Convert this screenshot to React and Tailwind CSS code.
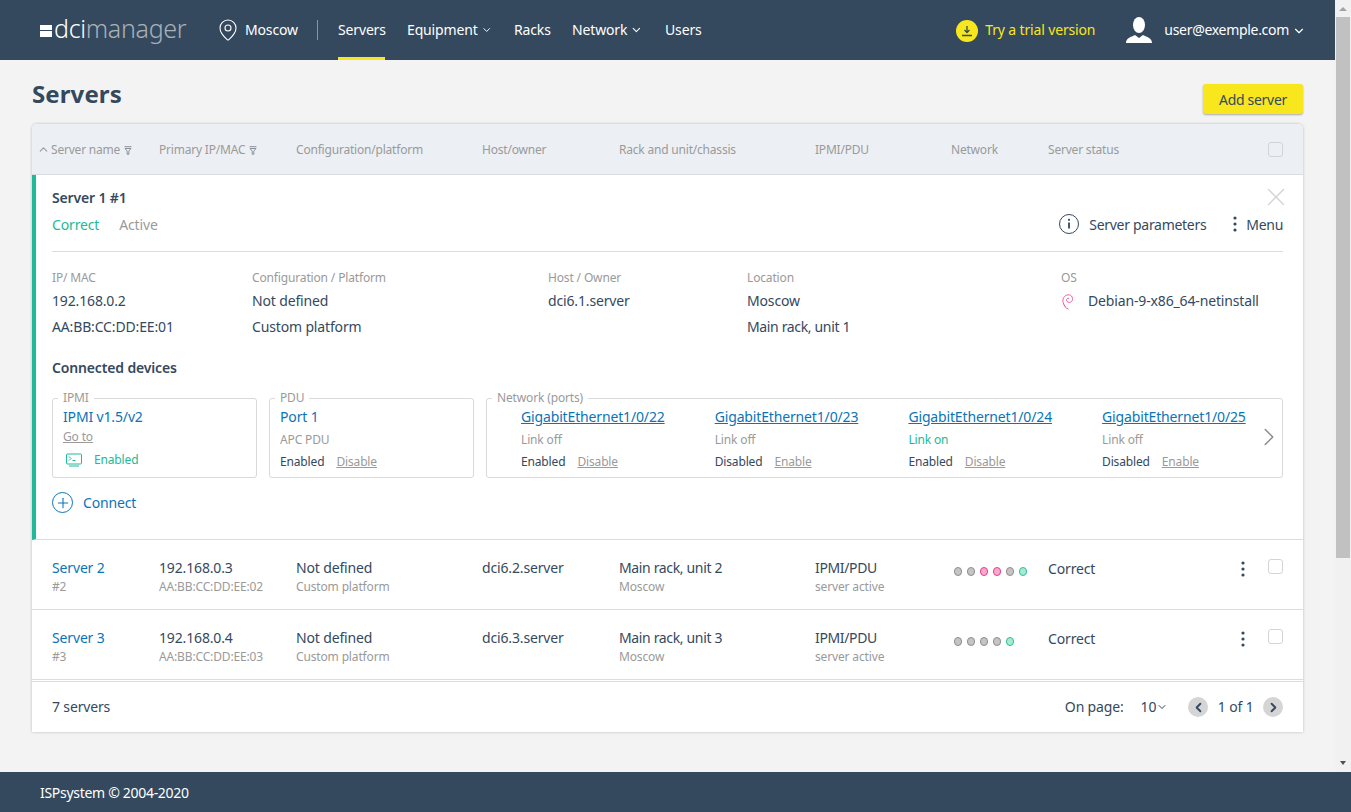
import React from "react";
import { ChevronDown, ChevronUp, ChevronLeft, ChevronRight, X, MapPin, Plus } from "lucide-react";

const font = "font-['Noto_Sans','Open_Sans',sans-serif]";

function Dots({ className = "" }) {
  return (
    <svg width="4" height="16" viewBox="0 0 4 16" className={className}>
      <circle cx="2" cy="2" r="1.6" fill="#34495e" />
      <circle cx="2" cy="8" r="1.6" fill="#34495e" />
      <circle cx="2" cy="14" r="1.6" fill="#34495e" />
    </svg>
  );
}

function Filter() {
  return (
    <svg width="8" height="9" viewBox="0 0 8 9" className="ml-1 mt-0.5">
      <path d="M.5.7h7M1 2.500l2.200 2.600v3.200h1.600V5.100L7 2.500z" fill="none" stroke="#8a9299" strokeWidth="1" />
    </svg>
  );
}

function Head({ w, children }) {
  return <div className={`${w} flex items-center shrink-0 pt-px`}>{children}</div>;
}

function Led({ c }) {
  const map = {
    g: "bg-[#c4c4c4] border-[#8f8f8f]",
    p: "bg-[#f7a8cc] border-[#e8408f]",
    t: "bg-[#a9e8d4] border-[#2dbf9b]",
  };
  return <span className={`w-2 h-[9px] rounded-full border ${map[c]}`} />;
}

function Row({ n, ip, mac, leds }) {
  return (
    <div className="h-[70px] shrink-0 flex pl-5 pt-[18px] border-b border-[#dcdcdc] bg-white box-border">
      <div className="w-[107px] shrink-0">
        <div className="text-[14px] leading-5 text-[#0a74b8]">Server {n}</div>
        <div className="text-[12px] leading-4 mt-px text-[#9a9a9a]">#{n}</div>
      </div>
      <div className="w-[137px] shrink-0">
        <div className="text-[14px] leading-5">{ip}</div>
        <div className="text-[12px] leading-4 mt-px text-[#9a9a9a]">{mac}</div>
      </div>
      <div className="w-[186px] shrink-0">
        <div className="text-[14px] leading-5">Not defined</div>
        <div className="text-[12px] leading-4 mt-px text-[#9a9a9a]">Custom platform</div>
      </div>
      <div className="w-[137px] shrink-0 text-[14px] leading-5">dci6.{n}.server</div>
      <div className="w-[196px] shrink-0">
        <div className="text-[14px] leading-5 tracking-[-0.35px]">Main rack, unit {n}</div>
        <div className="text-[12px] leading-4 mt-px text-[#9a9a9a]">Moscow</div>
      </div>
      <div className="w-[136px] shrink-0">
        <div className="text-[14px] leading-5 tracking-[-0.35px]">IPMI/PDU</div>
        <div className="text-[12px] leading-4 mt-px text-[#9a9a9a]">server active</div>
      </div>
      <div className="w-[97px] shrink-0 flex gap-[5px] pl-[3px] pt-[9px] items-start">
        {leds.map((c, i) => <Led key={i} c={c} />)}
      </div>
      <div className="w-[193px] shrink-0 text-[14px] leading-5 pt-px">Correct</div>
      <div className="w-[27px] shrink-0 pt-[3px]"><Dots /></div>
      <div className="w-[15px] h-[15px] shrink-0 border border-[#d4d4d4] rounded-[3px] mt-[1px] bg-white" />
    </div>
  );
}

function Box({ label, w, className = "", children }) {
  return (
    <div className={`${w} relative h-20 border border-[#d9d9d9] rounded-[3px] shrink-0 ${className}`}>
      <span className="absolute -top-[9px] left-[5px] bg-white px-[5px] text-[12px] leading-4 text-[#9a9a9a]">{label}</span>
      {children}
    </div>
  );
}

function Port({ name, link, on, state, action }) {
  return (
    <div className="w-[193.7px] shrink-0 whitespace-nowrap">
      <div className="text-[14px] leading-5 text-[#0a74b8] underline">{name}</div>
      <div className={`text-[12px] leading-4 mt-[5px] ${on ? "text-[#22b999]" : "text-[#9a9a9a]"}`}>{link}</div>
      <div className="text-[12px] leading-4 mt-[6px] flex gap-3">
        <span className="text-[#34495e]">{state}</span>
        <span className="text-[#9a9a9a] underline">{action}</span>
      </div>
    </div>
  );
}

function DetailCol({ w, label, children }) {
  return (
    <div className={`${w} shrink-0`}>
      <div className="text-[12px] leading-4 text-[#9a9a9a]">{label}</div>
      {children}
    </div>
  );
}

export default function App() {
  return (
    <div className={`h-screen flex flex-col overflow-hidden text-[#34495e] tracking-[-0.15px] ${font}`}>
      <div className="flex flex-1 min-h-0">
        <div className="flex-1 min-w-0 bg-[#f3f3f3] flex flex-col">
          <header className="h-[60px] shrink-0 bg-[#34495e] flex items-center text-white text-[14px] pl-10">
            <div className="w-[176px] shrink-0 flex items-center">
              <div className="flex flex-col gap-[1px] mr-[2px] mt-[1px]">
                <span className="w-3 h-[5px] bg-white" />
                <span className="w-3 h-[6px] bg-white" />
              </div>
              <span className="text-[25px] leading-none font-light tracking-[-0.3px] pb-[3px]">dci<span className="text-[#a9b1b8]">manager</span></span>
            </div>
            <MapPin size={24} strokeWidth={1.100} className="shrink-0" />
            <span className="ml-[5px] w-[72px] pb-[2px]">Moscow</span>
            <span className="w-px h-5 bg-[#8795a3] mr-5" />
            <nav className="flex h-full">
              <div className="w-[47px] relative flex items-center mr-[22px] pb-[2px]">Servers<span className="absolute left-0 right-0 bottom-0 h-[3px] bg-[#f8e71c]" /></div>
              <div className="w-[85px] flex items-center mr-[22px] pb-[2px]">Equipment<ChevronDown size={14} strokeWidth={2} className="ml-[3px] mt-[2px]" /></div>
              <div className="w-[36px] flex items-center mr-[22px] pb-[2px]">Racks</div>
              <div className="w-[71px] flex items-center mr-[22px] pb-[2px]">Network<ChevronDown size={14} strokeWidth={2} className="ml-[3px] mt-[2px]" /></div>
              <div className="flex items-center pb-[2px]">Users</div>
            </nav>
            <div className="ml-auto flex items-center pr-[29px]">
              <span className="w-[22px] h-[22px] rounded-full bg-[#f8e71c] flex items-center justify-center mr-[7px] mt-[2px]">
                <svg width="12" height="12" viewBox="0 0 12 12" fill="none" stroke="#34495e" strokeWidth="1.300"><path d="M6 1v6M3.500 5 6 7.500 8.500 5M1 10.500h10" /></svg>
              </span>
              <span className="text-[#f8e71c] w-[141px] pb-[2px]">Try a trial version</span>
              <svg width="26" height="26" viewBox="0 0 26 26" fill="#fff" className="mr-3"><ellipse cx="13" cy="8" rx="6" ry="8" /><path d="M0 26c0-5 5-6 9-8l4 3 4-3c4 2 9 3 9 8z" /></svg>
              <span className="pb-[2px] tracking-[-0.3px]">user@exemple.com</span>
              <ChevronDown size={14} strokeWidth={2} className="ml-[3px] mt-[1px]" />
            </div>
          </header>

          <main className="flex-1 min-h-0 pl-8 pr-8 flex flex-col">
            <div className="h-16 flex items-start justify-between shrink-0 pt-6">
              <h1 className="text-[24px] leading-5 font-bold tracking-[0.1px]">Servers</h1>
              <button className="w-[100px] h-[30px] bg-[#f8e71c] rounded-[3px] text-[14px] tracking-[-0.3px] shadow-[0_1px_2px_rgba(0,0,0,0.3)]">Add server</button>
            </div>

            <section className="rounded-t-[5px] bg-white shadow-[0_0_3px_rgba(0,0,0,0.25)] flex flex-col">
              <div className="h-[51px] bg-[#ecf0f4] rounded-t-[5px] border-b border-[#d9dde0] flex items-center text-[12px] tracking-[-0.2px] text-[#9a9a9a] pl-[5px] pr-5 shrink-0">
                <Head w="w-[122px]"><ChevronUp size={13} className="mr-[1px]" />Server name<Filter /></Head>
                <Head w="w-[137px]">Primary IP/MAC<Filter /></Head>
                <Head w="w-[186px]">Configuration/platform</Head>
                <Head w="w-[137px]">Host/owner</Head>
                <Head w="w-[196px]">Rack and unit/chassis</Head>
                <Head w="w-[136px]">IPMI/PDU</Head>
                <Head w="w-[97px]">Network</Head>
                <Head w="w-[220px]">Server status</Head>
                <div className="w-[15px] h-[15px] border border-[#d4d4d4] rounded-[3px] ml-auto" />
              </div>

              <div className="h-[365px] shrink-0 border-l-4 border-[#22b999] border-b-[1px] border-b-[#dcdcdc] pl-4 pr-5 pt-[13px] flex flex-col">
                <div className="flex justify-between h-[20px]">
                  <span className="text-[14px] leading-5 font-semibold">Server 1 #1</span>
                  <X size={30} strokeWidth={1.200} className="text-[#d5d5d5] -mr-[7.5px] -my-[6px]" />
                </div>
                <div className="flex justify-between items-center h-[24px] box-content pt-[4px] pb-[15px] border-b border-[#dcdcdc]">
                  <div className="text-[14px]">
                    <span className="text-[#22b999] mr-5">Correct</span>
                    <span className="text-[#9a9a9a]">Active</span>
                  </div>
                  <div className="flex items-center text-[14px]">
                    <svg width="20" height="20" viewBox="0 0 20 20" fill="none" stroke="#34495e" className="mr-[10px]">
                      <circle cx="10" cy="10" r="9.500" strokeWidth="1" />
                      <path d="M10 8.500v6" strokeWidth="1.800" />
                      <circle cx="10" cy="5.800" r="1.100" fill="#34495e" stroke="none" />
                    </svg>
                    <span className="mr-[27px] tracking-[-0.3px]">Server parameters</span>
                    <Dots className="mr-[9px]" />
                    <span className="tracking-[-0.3px]">Menu</span>
                  </div>
                </div>

                <div className="flex mt-[18px] text-[14px]">
                  <DetailCol w="w-[200px]" label="IP/ MAC">
                    <div className="mt-[5px] leading-5">192.168.0.2</div>
                    <div className="mt-[6px] leading-5">AA:BB:CC:DD:EE:01</div>
                  </DetailCol>
                  <DetailCol w="w-[296px]" label="Configuration / Platform">
                    <div className="mt-[5px] leading-5">Not defined</div>
                    <div className="mt-[6px] leading-5">Custom platform</div>
                  </DetailCol>
                  <DetailCol w="w-[199px]" label="Host / Owner">
                    <div className="mt-[5px] leading-5">dci6.1.server</div>
                  </DetailCol>
                  <DetailCol w="w-[314px]" label="Location">
                    <div className="mt-[5px] leading-5">Moscow</div>
                    <div className="mt-[6px] leading-5 tracking-[-0.35px]">Main rack, unit 1</div>
                  </DetailCol>
                  <DetailCol w="w-auto" label="OS">
                    <div className="mt-[5px] leading-5 flex items-center whitespace-nowrap">
                      <svg width="13" height="17" viewBox="0 0 13 17" fill="none" stroke="#ef5ba1" strokeWidth="1" className="mr-[14px]">
                        <path d="M4.500 13.500C1.500 11 1 6 3.500 3.500 6 1 11 1 11.500 5.500 12 9 8 10.500 6 8.500 4.800 7 6 4.800 8 5.200M3 11.500c.5 2 2 4 4.500 4.500" />
                      </svg>
                      Debian-9-x86_64-netinstall
                    </div>
                  </DetailCol>
                </div>

                <div className="text-[14px] leading-5 font-semibold mt-[21px]">Connected devices</div>

                <div className="flex gap-3 mt-[20px]">
                  <Box label="IPMI" w="w-[205px]">
                    <div className="pl-[10px] pt-2">
                      <div className="text-[14px] leading-5 text-[#0a74b8]">IPMI v1.5/v2</div>
                      <div className="text-[12px] leading-4 mt-[2px] text-[#9a9a9a] underline">Go to</div>
                      <div className="flex items-center mt-[7px] text-[12px] leading-4 text-[#22b999]">
                        <svg width="18" height="15" viewBox="0 0 18 15" fill="none" stroke="#22b999" strokeWidth="1" className="ml-[2px] mr-[11px]">
                          <rect x="1.500" y="1" width="15" height="10" rx="1" /><path d="M4 3.500 6 5.500 4 7.500M7.500 7.500h3M4 13h10" />
                        </svg>
                        Enabled
                      </div>
                    </div>
                  </Box>
                  <Box label="PDU" w="w-[205px]">
                    <div className="pl-[10px] pt-2">
                      <div className="text-[14px] leading-5 text-[#0a74b8]">Port 1</div>
                      <div className="text-[12px] leading-4 mt-[5px] text-[#9a9a9a]">APC PDU</div>
                      <div className="text-[12px] leading-4 mt-[6px] flex gap-3">
                        <span>Enabled</span>
                        <span className="text-[#9a9a9a] underline">Disable</span>
                      </div>
                    </div>
                  </Box>
                  <Box label="Network (ports)" w="w-[797px]" className="flex pl-[34px] pt-2">
                    <Port name="GigabitEthernet1/0/22" link="Link off" state="Enabled" action="Disable" />
                    <Port name="GigabitEthernet1/0/23" link="Link off" state="Disabled" action="Enable" />
                    <Port name="GigabitEthernet1/0/24" link="Link on" on state="Enabled" action="Disable" />
                    <Port name="GigabitEthernet1/0/25" link="Link off" state="Disabled" action="Enable" />
                    <ChevronRight size={30} strokeWidth={1.200} className="absolute -right-[1.5px] top-[23px] text-[#8a8a8a]" />
                  </Box>
                </div>

                <div className="flex items-center mt-[14px] text-[14px] text-[#0a74b8]">
                  <span className="w-[21px] h-[21px] rounded-full border border-[#0a74b8] flex items-center justify-center mr-[10px]"><Plus size={16} strokeWidth={1.600} /></span>
                  Connect
                </div>
              </div>

              <Row n={2} ip="192.168.0.3" mac="AA:BB:CC:DD:EE:02" leds={["g", "g", "p", "p", "g", "t"]} />
              <Row n={3} ip="192.168.0.4" mac="AA:BB:CC:DD:EE:03" leds={["g", "g", "g", "g", "t"]} />

              <div className="h-[51px] shrink-0 border-t border-[#dcdcdc] mt-[1px] flex items-center pl-5 pr-5 text-[14px]">
                <span className="pb-[2px]">7 servers</span>
                <span className="ml-auto mr-[17px] pb-[2px]">On page:</span>
                <span className="flex items-center mr-5 pb-[2px]">10<ChevronDown size={12} strokeWidth={2} className="mt-[2px]" /></span>
                <span className="w-5 h-5 rounded-full bg-[#d5d5d5] flex items-center justify-center"><ChevronLeft size={15} strokeWidth={3} /></span>
                <span className="mx-[9.500px] pb-[2px]">1 of 1</span>
                <span className="w-5 h-5 rounded-full bg-[#d5d5d5] flex items-center justify-center"><ChevronRight size={15} strokeWidth={3} /></span>
              </div>
            </section>
          </main>
        </div>
        <div className="w-4 shrink-0 bg-[#f1f1f1] flex flex-col items-center">
          <svg width="16" height="17" viewBox="0 0 16 17"><path d="M4 11l4-4 4 4z" fill="#a3a3a3" /></svg>
          <div className="w-[14px] h-[541px] bg-[#c1c1c1]" />
          <div className="flex-1" />
          <svg width="16" height="17" viewBox="0 0 16 17"><path d="M5 6h6l-3 4z" fill="#505050" /></svg>
        </div>
      </div>
      <footer className="h-10 shrink-0 bg-[#34495e] text-white text-[14px] tracking-[-0.3px] flex items-center pl-10">ISPsystem © 2004-2020</footer>
    </div>
  );
}
